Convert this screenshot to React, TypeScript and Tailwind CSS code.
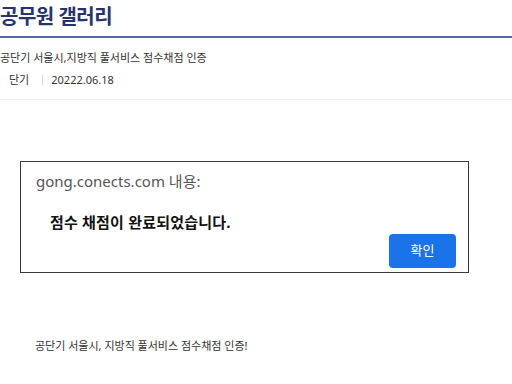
export default function App() {
  return (
    <div className="relative w-[512px] h-[384px] overflow-hidden bg-white text-[#222]" style={{ fontFamily: '"Noto Sans", "Noto Sans CJK KR", sans-serif' }}>
      <div className="h-[38px] border-b-2 border-[#5a64ad] pt-[2px]">
        <h1 className="text-[20px] font-semibold leading-[30px] text-[#26336e] tracking-[-0.5px]">공무원 갤러리</h1>
      </div>
      <div className="border-b border-[#eeeeee] h-[62px]">
        <p className="pt-[12px] text-[11px] leading-[16px] text-[#333]">공단기 서울시,지방직 풀서비스 점수채점 인증</p>
        <div className="mt-[6px] flex items-center text-[11px] leading-[16px] text-[#333]">
          <span className="pl-[9px]">단기</span>
          <span className="ml-[13px] h-[10px] w-px bg-[#d8d8d8]" />
          <span className="ml-[8px]">20222.06.18</span>
        </div>
      </div>
      <p className="mt-[238px] pl-[35px] text-[11px] leading-[16px] text-[#333]">공단기 서울시, 지방직 풀서비스 점수채점 인증!</p>

      <div className="absolute left-[20px] top-[161px] w-[449px] h-[112px] border border-[#3a3a3a] bg-white flex flex-col pl-[15px] pr-[12px] pt-[9px] pb-[4px]">
        <p className="text-[15px] leading-[20px] text-[#555]">gong.conects.com 내용:</p>
        <p className="mt-[21px] pl-[14px] text-[15px] font-bold leading-[20px] text-[#111] tracking-[0.2px]">점수 채점이 완료되었습니다.</p>
        <div className="flex justify-end mt-auto">
          <button className="w-[67px] h-[34px] rounded-[4px] bg-[#1a73e8] text-[13px] text-white">확인</button>
        </div>
      </div>
    </div>
  )
}
